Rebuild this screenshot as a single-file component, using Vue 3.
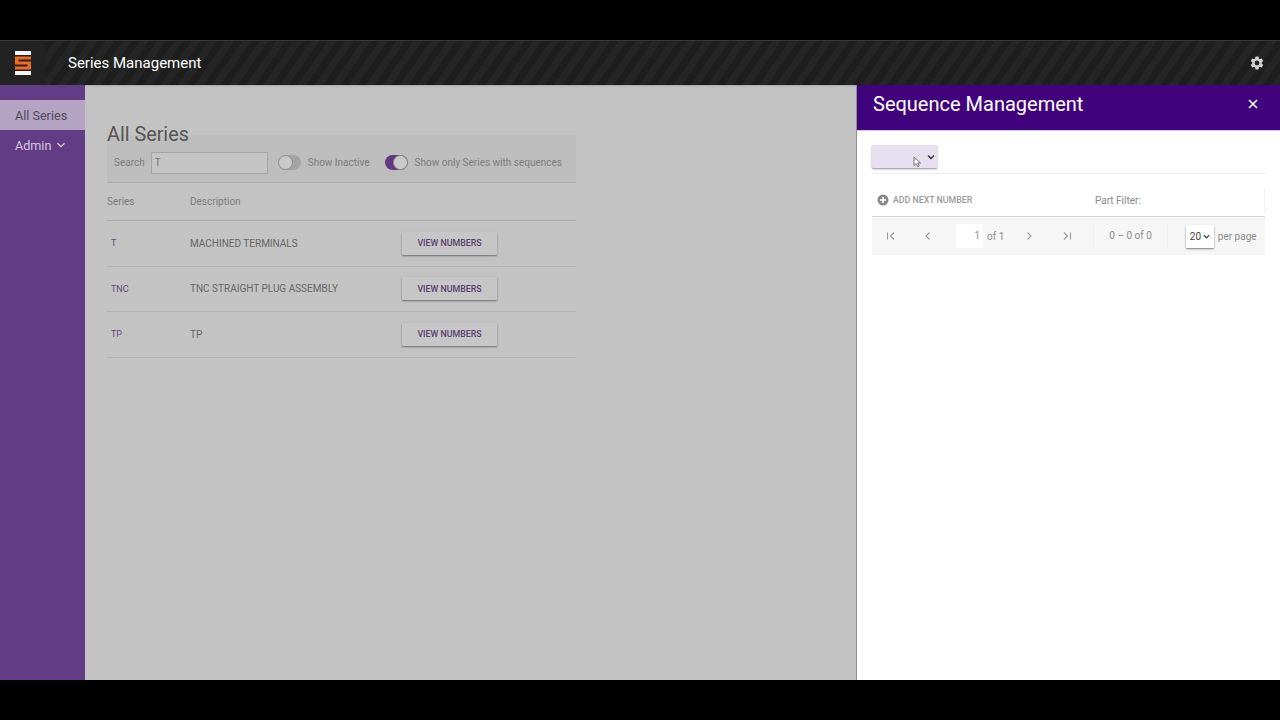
<script setup>
const rows = [
  { code: 'T', description: 'MACHINED TERMINALS' },
  { code: 'TNC', description: 'TNC STRAIGHT PLUG ASSEMBLY' },
  { code: 'TP', description: 'TP' },
]
</script>

<template>
  <div class="screen">
    <div class="app">
      <header class="toolbar">
        <div class="logo-box">
          <svg width="16" height="24" viewBox="0 0 16 24">
            <rect x="0" y="0" width="16" height="4" fill="#f4f4f4" />
            <rect x="0" y="20" width="16" height="4" fill="#f4f4f4" />
            <path d="M0 5.5h16v3H3.5v2H16v8H0v-3h12.5v-2H0z" fill="#f26a21" />
          </svg>
        </div>
        <div class="app-title">Series Management</div>
        <svg class="gear" width="16" height="16" viewBox="0 0 24 24">
          <path fill="#d4d4d4" d="M19.14 12.94c.04-.3.06-.61.06-.94s-.02-.64-.07-.94l2.03-1.58a.49.49 0 0 0 .12-.61l-1.92-3.32a.49.49 0 0 0-.59-.22l-2.39.96a7 7 0 0 0-1.62-.94l-.36-2.54a.48.48 0 0 0-.48-.41h-3.84a.48.48 0 0 0-.47.41l-.36 2.54c-.59.24-1.13.57-1.62.94l-2.39-.96a.48.48 0 0 0-.59.22L2.74 8.87a.48.48 0 0 0 .12.61l2.03 1.58c-.05.3-.09.63-.09.94s.02.64.07.94l-2.03 1.58a.49.49 0 0 0-.12.61l1.92 3.32c.12.22.37.29.59.22l2.39-.96c.5.38 1.03.7 1.62.94l.36 2.54c.05.24.24.41.48.41h3.84c.24 0 .44-.17.47-.41l.36-2.54c.59-.24 1.13-.56 1.62-.94l2.39.96c.22.08.47 0 .59-.22l1.92-3.32a.48.48 0 0 0-.12-.61zM12 15.6a3.6 3.6 0 1 1 0-7.2 3.6 3.6 0 0 1 0 7.2z" />
        </svg>
      </header>

      <div class="body">
        <nav class="sidebar">
          <div class="nav-item active">All Series</div>
          <div class="nav-item">
            Admin
            <svg width="10" height="10" viewBox="0 0 10 10" class="chev">
              <path d="M1.5 3.2 5 6.7l3.5-3.5" fill="none" stroke="#dcd0e2" stroke-width="1.3" />
            </svg>
          </div>
        </nav>

        <main class="content">
          <div class="series-page">
            <h1>All Series</h1>
            <div class="filters">
              <label class="search-label">Search</label>
              <input class="search-input" value="T" />
              <span class="switch">
                <span class="knob"></span>
              </span>
              <span class="switch-label">Show Inactive</span>
              <span class="switch on">
                <span class="knob"></span>
              </span>
              <span class="switch-label">Show only Series with sequences</span>
            </div>
            <div class="table-head">
              <span class="col-series">Series</span>
              <span>Description</span>
            </div>
            <div v-for="row in rows" :key="row.code" class="table-row">
              <span class="col-series code">{{ row.code }}</span>
              <span class="col-desc">{{ row.description }}</span>
              <button class="view-btn">VIEW NUMBERS</button>
            </div>
          </div>
        </main>

        <aside class="panel">
          <div class="panel-head">
            <span class="panel-title">Sequence Management</span>
            <svg width="12" height="12" viewBox="0 0 12 12" class="close">
              <path d="M2 2l8 8M10 2l-8 8" stroke="#fff" stroke-width="1.6" />
            </svg>
          </div>
          <div class="panel-body">
            <div class="select-row">
              <div class="fake-select">
                <svg width="8" height="8" viewBox="0 0 8 8">
                  <path d="M1 2.5 4 5.5l3-3" fill="none" stroke="#333" stroke-width="1.4" />
                </svg>
                <svg class="cursor" width="9" height="12" viewBox="0 0 9 12">
                  <path d="M1 1v8.5l2.2-2 1.5 3.2 1.5-.7-1.5-3h2.8z" fill="#fff" stroke="#555" stroke-width=".8" />
                </svg>
              </div>
            </div>
            <div class="grid-toolbar">
              <span class="add-next">
                <svg width="12" height="12" viewBox="0 0 12 12">
                  <circle cx="6" cy="6" r="5.5" fill="#8a8a8a" />
                  <path d="M6 3v6M3 6h6" stroke="#fff" stroke-width="1.6" />
                </svg>
                ADD NEXT NUMBER
              </span>
              <span class="part-filter">Part Filter:</span>
              <span class="part-input"></span>
            </div>
            <div class="pager">
              <svg width="10" height="10" viewBox="0 0 10 10" class="pg-first">
                <path d="M1.5 1.5v7M8 1.5 4.5 5 8 8.5" fill="none" stroke="#9a9a9a" stroke-width="1.1" />
              </svg>
              <svg width="10" height="10" viewBox="0 0 10 10" class="pg-prev">
                <path d="M6.5 1.5 3 5l3.5 3.5" fill="none" stroke="#9a9a9a" stroke-width="1.1" />
              </svg>
              <span class="page-box">1</span>
              <span class="of">of 1</span>
              <svg width="10" height="10" viewBox="0 0 10 10" class="pg-next">
                <path d="M3.5 1.5 7 5 3.5 8.5" fill="none" stroke="#9a9a9a" stroke-width="1.1" />
              </svg>
              <svg width="10" height="10" viewBox="0 0 10 10" class="pg-last">
                <path d="M8.5 1.5v7M2 1.5 5.5 5 2 8.5" fill="none" stroke="#9a9a9a" stroke-width="1.1" />
              </svg>
              <span class="range">0 – 0 of 0</span>
              <span class="per-select">
                20
                <svg width="7" height="7" viewBox="0 0 8 8">
                  <path d="M1 2.5 4 5.5l3-3" fill="none" stroke="#333" stroke-width="1.4" />
                </svg>
              </span>
              <span class="per-page">per page</span>
            </div>
          </div>
        </aside>
      </div>
    </div>
  </div>
</template>

<style>
html,
body {
  margin: 0;
  background: #000;
}
</style>

<style scoped>
.screen {
  height: 720px;
  box-sizing: border-box;
  padding: 40px 0;
  background: #000;
  font-family: Roboto, "Liberation Sans", sans-serif;
}

.app {
  height: 640px;
  display: flex;
  flex-direction: column;
}

.toolbar {
  height: 45px;
  flex-shrink: 0;
  display: flex;
  align-items: center;
  box-sizing: border-box;
  border-top: 1px solid #3a3a34;
  background: repeating-linear-gradient(-55deg, #252525 0 7px, #1e1e1e 7px 14px);
}

.logo-box {
  width: 45px;
  height: 100%;
  display: flex;
  align-items: center;
  justify-content: center;
  background: #222;
}

.app-title {
  margin-left: 23px;
  color: #fff;
  font-size: 15px;
}

.gear {
  margin-left: auto;
  margin-right: 15px;
}

.body {
  flex: 1;
  display: flex;
  min-height: 0;
}

.sidebar {
  width: 85px;
  flex-shrink: 0;
  box-sizing: border-box;
  padding-top: 15px;
  background: #623c84;
}

.nav-item {
  height: 30px;
  display: flex;
  align-items: center;
  padding-left: 15px;
  font-size: 12.6px;
  color: #d6c9df;
}

.nav-item.active {
  background: #b5a3c3;
  color: #4f4a56;
}

.chev {
  margin-left: 5px;
}

.content {
  flex: 1;
  min-width: 0;
  background: #c3c3c3;
  box-shadow: inset 0 2px 2px -1px #aaa;
}

.series-page {
  width: 469px;
  margin-left: 22px;
  padding-top: 39px;
}

h1 {
  margin: 0;
  height: 22px;
  line-height: 22px;
  font-size: 19.8px;
  font-weight: 400;
  color: #555;
}

.filters {
  height: 48px;
  margin-top: -11px;
  box-sizing: border-box;
  padding: 8px 0 0 7px;
  display: flex;
  align-items: center;
  background: #bdbdbd;
  border-bottom: 1px solid #adadad;
  font-size: 10px;
  color: #7c7c7c;
}

.search-input {
  width: 117px;
  height: 22px;
  box-sizing: border-box;
  margin-left: 6px;
  padding: 0 3px;
  border: 1px solid #a5a5a5;
  background: #c4c4c4;
  font: inherit;
  color: #777;
}

.switch {
  position: relative;
  width: 23px;
  height: 15px;
  margin-left: 10px;
  border-radius: 8px;
  background: #a3a3a3;
}

.switch .knob {
  position: absolute;
  left: 0;
  top: 0;
  width: 15px;
  height: 15px;
  box-sizing: border-box;
  border-radius: 50%;
  border: 1px solid #8f8f8f;
  background: #c9c9c9;
}

.switch.on {
  margin-left: 15px;
  background: #5f3a80;
}

.switch.on .knob {
  left: 8px;
}

.switch-label {
  margin-left: 7px;
}

.table-head {
  height: 37px;
  display: flex;
  align-items: center;
  border-bottom: 1px solid #aeaeae;
  font-size: 10px;
  color: #7b7b7b;
}

.col-series {
  width: 83px;
  flex-shrink: 0;
}

.table-row {
  height: 45.5px;
  box-sizing: border-box;
  display: flex;
  align-items: center;
  border-bottom: 1px solid #b2b2b2;
  font-size: 10px;
  color: #666;
}

.code {
  box-sizing: border-box;
  padding-left: 4px;
  font-size: 9px;
  color: #5e4a78;
}

.col-desc {
  width: 212px;
  flex-shrink: 0;
}

.view-btn {
  width: 95px;
  height: 23px;
  padding: 0;
  border: 0;
  border-radius: 1px;
  background: #c6c6c6;
  box-shadow: 0 1px 2px rgba(0, 0, 0, 0.45);
  font: inherit;
  font-size: 8.8px;
  font-weight: 500;
  color: #56406f;
}

.panel {
  width: 424px;
  flex-shrink: 0;
  display: flex;
  flex-direction: column;
  background: #fff;
  border-left: 1px solid #8f8f8f;
  box-sizing: border-box;
}

.panel-head {
  height: 46px;
  flex-shrink: 0;
  display: flex;
  align-items: center;
  justify-content: space-between;
  padding: 0 21px 8px 16px;
  background: #41037c;
  border-bottom: 1px solid #d5c8e0;
  box-sizing: border-box;
}

.panel-title {
  color: #fff;
  font-size: 20px;
}

.panel-body {
  padding: 0 15px;
}

.select-row {
  height: 43px;
  padding-top: 14px;
  box-sizing: border-box;
  border-bottom: 1px solid #eee;
}

.fake-select {
  position: relative;
  width: 65px;
  height: 23px;
  display: flex;
  align-items: center;
  justify-content: flex-end;
  padding-right: 2px;
  box-sizing: border-box;
  border-radius: 1px;
  background: #e6dff0;
  box-shadow: 0 1px 2px rgba(0, 0, 0, 0.45);
}

.cursor {
  position: absolute;
  left: 41px;
  top: 11px;
}

.grid-toolbar {
  height: 43px;
  display: flex;
  align-items: center;
  padding: 10px 0 0 5px;
  border-bottom: 1px solid #d6d6d6;
  box-sizing: border-box;
}

.add-next {
  display: flex;
  align-items: center;
  gap: 4px;
  width: 218px;
  font-size: 8.8px;
  font-weight: 500;
  color: #9b9b9b;
}

.part-filter {
  font-size: 10px;
  color: #8a8a8a;
}

.part-input {
  flex: 1;
  height: 23px;
  margin-left: 7px;
  border-right: 1px dotted #e6e6e6;
}

.pager {
  height: 38px;
  display: flex;
  align-items: center;
  background: #f6f6f6;
  font-size: 10px;
  color: #8c8c8c;
}

.pg-first {
  margin-left: 14px;
}

.pg-prev {
  margin-left: 27px;
}

.page-box {
  width: 27px;
  height: 24px;
  line-height: 24px;
  margin-left: 23px;
  box-sizing: border-box;
  padding-right: 3px;
  text-align: right;
  background: #fff;
}

.of {
  margin-left: 4px;
}

.pg-next {
  margin-left: 20px;
}

.pg-last {
  margin-left: 28px;
}

.range {
  height: 24px;
  line-height: 24px;
  margin-left: 21px;
  padding: 0 15px;
  border-left: 1px solid #efefef;
  border-right: 1px solid #efefef;
}

.per-select {
  display: flex;
  align-items: center;
  gap: 2px;
  width: 28px;
  height: 23px;
  box-sizing: border-box;
  margin-left: 18px;
  padding-left: 4px;
  background: #fff;
  border-radius: 1px;
  box-shadow: 0 1px 2px rgba(0, 0, 0, 0.5);
  color: #444;
}

.per-page {
  margin-left: 4px;
}
</style>
